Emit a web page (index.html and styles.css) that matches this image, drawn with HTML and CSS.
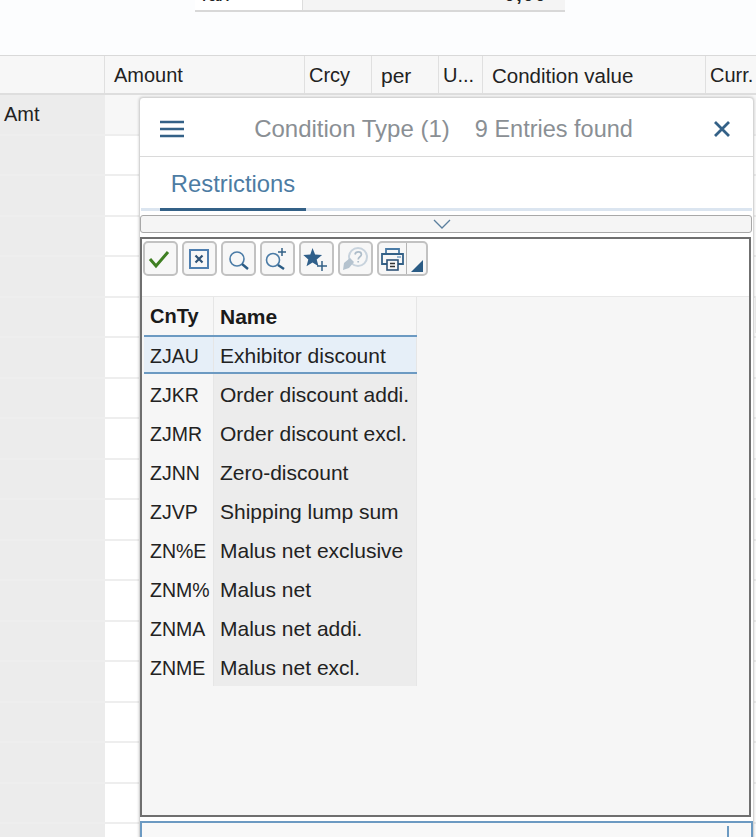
FILE: index.html
```html
<!DOCTYPE html>
<html lang="en">
<head>
    <meta charset="UTF-8">
    <meta name="viewport" content="width=device-width, initial-scale=1.0">
    <title>Condition Type</title>
    <link rel="stylesheet" href="styles.css">
</head>
<body>

<div class="summary">
    <div class="summary-label"><span>Tax</span></div>
    <div class="summary-value"><span>0,00</span></div>
</div>

<div class="items">
    <div class="items-head">
        <div class="col col-a"></div>
        <div class="col col-b">Amount</div>
        <div class="col col-c">Crcy</div>
        <div class="col col-d">per</div>
        <div class="col col-e">U...</div>
        <div class="col col-f">Condition value</div>
        <div class="col col-g">Curr.</div>
    </div>
    <div class="items-row first"><div class="col-a">Amt</div><div class="col-rest"></div></div>
    <div class="items-row"><div class="col-a"></div><div class="col-rest"></div></div>
    <div class="items-row"><div class="col-a"></div><div class="col-rest"></div></div>
    <div class="items-row"><div class="col-a"></div><div class="col-rest"></div></div>
    <div class="items-row"><div class="col-a"></div><div class="col-rest"></div></div>
    <div class="items-row"><div class="col-a"></div><div class="col-rest"></div></div>
    <div class="items-row"><div class="col-a"></div><div class="col-rest"></div></div>
    <div class="items-row"><div class="col-a"></div><div class="col-rest"></div></div>
    <div class="items-row"><div class="col-a"></div><div class="col-rest"></div></div>
    <div class="items-row"><div class="col-a"></div><div class="col-rest"></div></div>
    <div class="items-row"><div class="col-a"></div><div class="col-rest"></div></div>
    <div class="items-row"><div class="col-a"></div><div class="col-rest"></div></div>
    <div class="items-row"><div class="col-a"></div><div class="col-rest"></div></div>
    <div class="items-row"><div class="col-a"></div><div class="col-rest"></div></div>
    <div class="items-row"><div class="col-a"></div><div class="col-rest"></div></div>
    <div class="items-row"><div class="col-a"></div><div class="col-rest"></div></div>
    <div class="items-row"><div class="col-a"></div><div class="col-rest"></div></div>
    <div class="items-row"><div class="col-a"></div><div class="col-rest"></div></div>
    <div class="items-row"><div class="col-a"></div><div class="col-rest"></div></div>
</div>

<div class="dialog">
    <div class="dialog-head">
        <svg class="menu-icon" width="24" height="18" viewBox="0 0 24 18"><path d="M0 2h24M0 9h24M0 16h24" stroke="#346187" stroke-width="2.6"/></svg>
        <div class="dialog-title">Condition Type (1)<span class="dialog-count">9 Entries found</span></div>
        <svg class="close-icon" width="18" height="18" viewBox="0 0 18 18"><path d="M2 2l14 14M16 2L2 16" stroke="#346187" stroke-width="2.8"/></svg>
    </div>
    <div class="tabs">
        <div class="tab">Restrictions</div>
    </div>
    <div class="collapse-bar">
        <svg width="20" height="10" viewBox="0 0 20 10"><path d="M2 1l8 8 8-8" fill="none" stroke="#5b7f9e" stroke-width="1.3"/></svg>
    </div>
    <div class="frame">
        <div class="toolbar">
            <div class="tool">
                <svg width="31" height="31" viewBox="0 0 31 31"><path d="M5 16l6 7L23 9" fill="none" stroke="#3f7f22" stroke-width="3"/></svg>
            </div>
            <div class="tool">
                <svg width="31" height="31" viewBox="0 0 31 31"><rect x="6" y="7" width="18" height="18" fill="none" stroke="#4f7fb0" stroke-width="2"/><path d="M11.500 12.500l7 7M18.500 12.500l-7 7" stroke="#2f5377" stroke-width="2.200"/></svg>
            </div>
            <div class="tool">
                <svg width="31" height="31" viewBox="0 0 31 31"><circle cx="14" cy="16" r="7" fill="none" stroke="#4a7ba6" stroke-width="1.600"/><path d="M19 21l6 5" stroke="#2b5c85" stroke-width="2.400"/></svg>
            </div>
            <div class="tool">
                <svg width="31" height="31" viewBox="0 0 31 31"><circle cx="11" cy="17" r="6.500" fill="none" stroke="#4a7ba6" stroke-width="1.600"/><path d="M16 22l6 4" stroke="#2b5c85" stroke-width="2.400"/><path d="M20 5v8M16 9h8" stroke="#346187" stroke-width="1.500"/></svg>
            </div>
            <div class="tool">
                <svg width="31" height="31" viewBox="0 0 31 31"><path d="M11.500 5l2.600 6.600 7 .4-5.400 4.500 1.800 6.800-6-3.800-6 3.800 1.800-6.800L2.300 12l7-.4z" fill="#2f5f8a"/><path d="M21 18v10M16 23h10" stroke="#346187" stroke-width="1.500"/></svg>
            </div>
            <div class="tool">
                <svg width="31" height="31" viewBox="0 0 31 31"><circle cx="18" cy="14" r="9" fill="none" stroke="#c8d3dd" stroke-width="2"/><path d="M15 11.500c.6-3.400 6.400-3.400 6.400 0 0 2.300-3.200 2.300-3.200 5M18.200 18v1.600" fill="none" stroke="#aebdca" stroke-width="1.700"/><path d="M3 27l1-7 6-5 4 4-5 6z" fill="#b5c3cf"/></svg>
            </div>
            <div class="tool-split">
                <div class="tool-main">
                    <svg width="27" height="31" viewBox="0 0 27 31"><path d="M7 11V6h13v5" fill="none" stroke="#4a7ba6" stroke-width="1.800"/><path d="M8 21H3V11h21v10h-5" fill="none" stroke="#346187" stroke-width="1.800"/><rect x="8" y="17" width="11" height="10" fill="none" stroke="#2f5377" stroke-width="1.600"/><path d="M11 20.500h5M11 23.500h5" stroke="#333" stroke-width="1.300"/><path d="M18 14h4" stroke="#7fa3c4" stroke-width="1.600"/></svg>
                </div>
                <div class="tool-arrow">
                    <svg width="12" height="12" viewBox="0 0 12 12"><path d="M12 0v12H0z" fill="#2b5c85"/></svg>
                </div>
            </div>
        </div>
        <div class="hits">
            <div class="hits-head">
                <div class="hits-code">CnTy</div>
                <div class="hits-name">Name</div>
            </div>
            <div class="hits-row selected"><div class="hits-code">ZJAU</div><div class="hits-name">Exhibitor discount</div></div>
            <div class="hits-row"><div class="hits-code">ZJKR</div><div class="hits-name">Order discount addi.</div></div>
            <div class="hits-row"><div class="hits-code">ZJMR</div><div class="hits-name">Order discount excl.</div></div>
            <div class="hits-row"><div class="hits-code">ZJNN</div><div class="hits-name">Zero-discount</div></div>
            <div class="hits-row"><div class="hits-code">ZJVP</div><div class="hits-name">Shipping lump sum</div></div>
            <div class="hits-row"><div class="hits-code">ZN%E</div><div class="hits-name">Malus net exclusive</div></div>
            <div class="hits-row"><div class="hits-code">ZNM%</div><div class="hits-name">Malus net</div></div>
            <div class="hits-row"><div class="hits-code">ZNMA</div><div class="hits-name">Malus net addi.</div></div>
            <div class="hits-row"><div class="hits-code">ZNME</div><div class="hits-name">Malus net excl.</div></div>
        </div>
    </div>
    <div class="status-field"><div class="status-mark"></div></div>
</div>

</body>
</html>
```

FILE: styles.css
```css
html, body {
    height: 837px;
    overflow: hidden;
}

body {
    position: relative;
    margin: 0;
    background-color: #fcfdfe;
    color: #222;
    font-family: "Liberation Sans", Arial, sans-serif;
    font-size: 20px;
}

/* Cut off summary row at the top */
.summary {
    display: flex;
    height: 12px;
    margin-left: 195px;
    width: 370px;
    overflow: hidden;
    border-bottom: 2px solid #d8d8d8;
    box-sizing: border-box;
}

.summary-label {
    width: 108px;
    padding-left: 3px;
    line-height: 12px;
    border-right: 1px solid #ddd;
    box-sizing: border-box;
    background-color: #fff;
}

.summary-label span {
    display: block;
    margin-top: -12px;
}

.summary-value {
    flex: 1;
    padding-right: 18px;
    text-align: right;
    font-weight: bold;
    letter-spacing: 1px;
    background-color: #f4f4f4;
    line-height: 12px;
}

.summary-value span {
    display: block;
    margin-top: -12px;
}

/* Items table behind the dialog */
.items {
    margin-top: 43px;
    border-top: 1px solid #d9d9d9;
}

.items-head {
    display: flex;
    height: 37px;
    line-height: 39px;
    background-color: #f7f7f7;
    border-bottom: 2px solid #dedede;
}

.col {
    box-sizing: border-box;
    height: 100%;
    border-right: 1px solid #e0e0e0;
    white-space: nowrap;
    overflow: hidden;
}

.col-a { width: 105px; }
.col-b { width: 200px; padding-left: 9px; }
.col-c { width: 67px; padding-left: 4px; }
.col-d { width: 67px; padding-left: 9px; font-size: 21px; }
.col-e { width: 44px; padding-left: 4px; }
.col-f { width: 223px; padding-left: 9px; font-size: 20.500px; }
.col-g { width: 50px; padding-left: 4px; border-right: none; }

.items-row {
    display: flex;
    height: 38.5px;
    border-bottom: 2px solid #eeeeee;
}

.items-row .col-a {
    flex: none;
    box-sizing: border-box;
    padding: 8px 0 0 4px;
    background-color: #ececec;
}

.col-rest {
    flex: 1;
    background-color: #fff;
}

.items-row.first .col-rest {
    background-color: #f7f7f7;
}

/* Value help dialog */
.dialog {
    position: absolute;
    left: 139px;
    top: 97px;
    width: 615px;
    height: 760px;
    background-color: #fff;
    border: 1px solid #d5d5d5;
    border-radius: 4px 4px 0 0;
    box-sizing: border-box;
    box-shadow: 0 0 3px rgba(0, 0, 0, 0.2);
}

.dialog-head {
    display: flex;
    align-items: center;
    height: 55px;
    padding: 3px 22px 0 20px;
    border-bottom: 1px solid #dadada;
}

.dialog-title {
    flex: 1;
    text-align: center;
    padding-right: 10px;
    color: #8a8f94;
    font-size: 24px;
    white-space: nowrap;
}

.dialog-count {
    margin-left: 25px;
    font-size: 23.500px;
}

.tabs {
    height: 54px;
    margin: 0 1px;
    border-bottom: 3px solid #dbe5f0;
    box-sizing: border-box;
}

.tab {
    display: inline-block;
    box-sizing: border-box;
    height: 54px;
    width: 146px;
    margin-left: 19px;
    padding-top: 13px;
    text-align: center;
    color: #4d7ca3;
    font-size: 23.800px;
    border-bottom: 3px solid #346187;
}

.collapse-bar {
    display: flex;
    justify-content: center;
    align-items: center;
    height: 18px;
    margin: 4px 1px 0 0;
    padding-right: 8px;
    background-color: #f5f5f5;
    border: 1px solid #a8a8a8;
    border-radius: 3px;
    box-sizing: border-box;
}

.frame {
    height: 580px;
    margin: 4px 2px 0 0;
    border: 2px solid #6f6f6f;
    background-color: #f6f6f6;
    box-sizing: border-box;
}

.toolbar {
    display: flex;
    gap: 4px;
    height: 58px;
    padding: 2px 0 0 1px;
    box-sizing: border-box;
    background-color: #fff;
    border-bottom: 1px solid #e8e8e8;
}

.tool, .tool-split {
    display: flex;
    align-items: center;
    justify-content: center;
    width: 35px;
    height: 35px;
    border: 2px solid #c2c2c2;
    border-radius: 5px;
    box-sizing: border-box;
    background-color: #f7f7f7;
}

.tool-split {
    width: 51px;
    justify-content: flex-start;
}

.tool-main {
    display: flex;
    align-items: center;
    justify-content: center;
    width: 27px;
    height: 100%;
    border-right: 1px solid #b5b5b5;
}

.tool-arrow {
    flex: 1;
    display: flex;
    justify-content: center;
    align-items: flex-end;
    padding-bottom: 2px;
    box-sizing: border-box;
    height: 100%;
}

.hits {
    padding-left: 2px;
}

.hits-head {
    display: flex;
    width: 273px;
    height: 38px;
    line-height: 39px;
    font-weight: bold;
    color: #1a1a1a;
    background-color: #f7f7f7;
    box-shadow: 610px -1px 0 -1px #e8e8e8;
}

.hits-row {
    display: flex;
    width: 273px;
    height: 39px;
    line-height: 41px;
}

.hits-code {
    box-sizing: border-box;
    width: 70px;
    padding: 1px 0 0 6px;
    font-size: 19.500px;
    border-right: 1px solid #e6e6e6;
    white-space: nowrap;
}

.hits-name {
    box-sizing: border-box;
    width: 203px;
    padding-left: 6px;
    font-size: 21px;
    white-space: nowrap;
    overflow: hidden;
    background-color: #ececec;
    border-right: 1px solid #e6e6e6;
}

.hits-head .hits-code {
    padding-top: 0;
    font-size: 20px;
}

.hits-head .hits-name {
    background-color: #f7f7f7;
}

.hits-row.selected {
    line-height: 37px;
    border-top: 2px solid #6c9ac2;
    border-bottom: 2px solid #6c9ac2;
    box-sizing: border-box;
    background-color: #e6eff8;
}

.hits-row.selected .hits-name {
    background-color: #e6eff8;
}

.status-field {
    position: relative;
    height: 40px;
    margin: 4px 0 0 0;
    border: 2px solid #6c9ac2;
    background-color: #f8f8f8;
    box-sizing: border-box;
}

.status-mark {
    position: absolute;
    left: 585px;
    top: 3px;
    width: 2px;
    height: 20px;
    background-color: #6c9ac2;
}
```
